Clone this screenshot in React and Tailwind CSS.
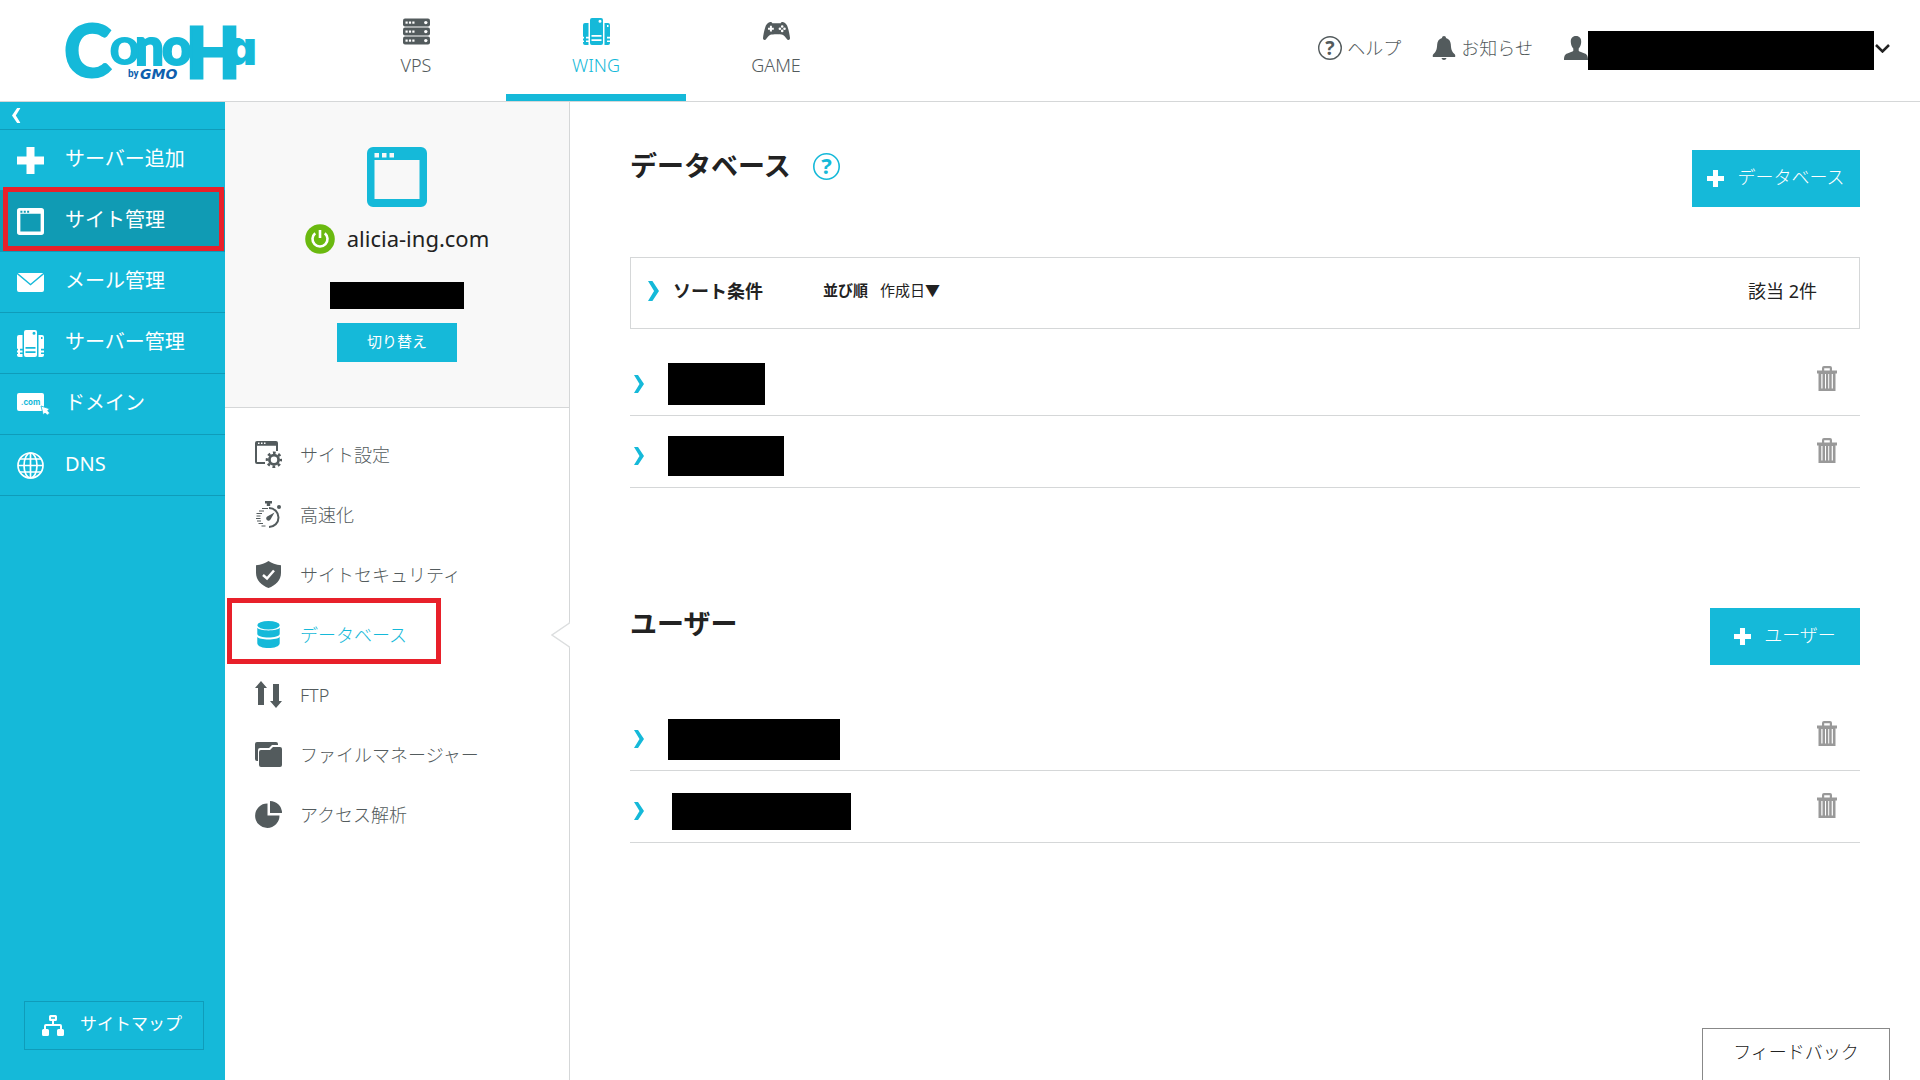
import React from "react";

const Logo = () => (
  <svg width="192" height="60" viewBox="64 20 192 60" role="img" aria-label="ConoHa by GMO" className="overflow-visible">
    <g fill="#15b9d9" stroke="#15b9d9" strokeWidth="2" fontFamily="Lato, sans-serif" fontWeight="900">
      <text x="64" y="76" fontSize="72">C</text>
      <text x="109" y="64" fontSize="54" stroke="#fff" strokeWidth="4" paintOrder="stroke">o</text>
      <text x="135" y="64" fontSize="51">n</text>
      <text x="162" y="64" fontSize="51">o</text>
      <text x="186" y="77" fontSize="70" strokeWidth="3">H</text>
      <text x="226" y="64" fontSize="48" strokeWidth="0" fontFamily="Inter, sans-serif" style={{ fontFeatureSettings: '"cv11"' }}>a</text>
    </g>
    <g fill="#0f5fae" fontWeight="700">
      <text x="128" y="76" fontSize="10" fontFamily="Roboto, sans-serif">by</text>
      <text x="140" y="78" fontSize="14" fontStyle="italic" fontFamily="'DejaVu Sans', sans-serif">GMO</text>
    </g>
  </svg>
);

const RackIcon = () => (
  <svg width="27" height="27" viewBox="0 0 27 27" fill="currentColor">
    {[0, 9, 18].map((y) => (
      <g key={y}>
        <rect x="0" y={y + 0.5} width="27" height="8" rx="2" />
        <g fill="#fff">
          <rect x="2.5" y={y + 3.5} width="2.2" height="2.2" />
          <rect x="5.9" y={y + 3.5} width="2.2" height="2.2" />
          <rect x="9.3" y={y + 3.5} width="2.2" height="2.2" />
          <circle cx="22.8" cy={y + 4.6} r="1.7" />
        </g>
      </g>
    ))}
  </svg>
);

const ServersIcon = () => (
  <svg width="27" height="27" viewBox="0 0 27 27" fill="currentColor" fillRule="evenodd">
    <path d="M9 0h9a2 2 0 0 1 2 2v23a2 2 0 0 1-2 2H9a2 2 0 0 1-2-2V2a2 2 0 0 1 2-2zM8.500 17v1.800h10V17zM8.500 21.200V23h10v-1.800zM17 1.800a1.500 1.500 0 1 0 0 3 1.500 1.500 0 0 0 0-3z" />
    <path d="M2 5h3.500v13.800H3v1.600h2.500v2H3V24h2.500v3H2a2 2 0 0 1-2-2v-1h1v-1.600H0v-2h1v-1.600H0V7a2 2 0 0 1 2-2z" />
    <path d="M21.500 5H25a2 2 0 0 1 2 2v11.800h-3v1.600h3v2h-3V24h3v1a2 2 0 0 1-2 2h-3.500zM24 7v2h1.500V7z" />
  </svg>
);

const GamepadIcon = () => (
  <svg width="27" height="27" viewBox="0 0 27 27" fill="currentColor" fillRule="evenodd">
    <path d="M6.500 4.300C7.500 3.900 8.700 4 9.300 5.200h8.400c.6-1.200 1.800-1.300 2.800-.9 2.300.8 3.500 2.500 4.300 5.200 1 3.300 1.900 7.500 2.200 10.500.1 1.800-1.500 2.600-2.700 1.500-1.400-1.500-3-3.900-4.800-4.700-2-.8-10-.8-12 0-1.800.8-3.400 3.200-4.800 4.700C1.500 22.600-.1 21.800 0 20c.3-3 1.200-7.200 2.200-10.500.8-2.700 2-4.400 4.300-5.200zM6.900 7.800v1.900H5v2h1.900v1.900h2v-1.900h1.900v-2H8.900V7.800zM19.200 7.200a1.300 1.300 0 1 0 0 2.600 1.300 1.300 0 0 0 0-2.600zm0 4.400a1.300 1.300 0 1 0 0 2.600 1.300 1.300 0 0 0 0-2.600zM16.900 9.400a1.300 1.300 0 1 0 0 2.600 1.300 1.300 0 0 0 0-2.600zm4.600 0a1.300 1.300 0 1 0 0 2.600 1.300 1.300 0 0 0 0-2.600z" />
  </svg>
);

const HelpIcon = ({ size }) => (
  <svg width={size} height={size} viewBox="0 0 27 27" className="overflow-visible">
    <circle cx="13.500" cy="13.500" r="12.700" fill="none" stroke="currentColor" strokeWidth="1.600" />
    <text x="13.500" y="21" textAnchor="middle" fontSize="22" fontWeight="700" fontFamily="Noto Sans, sans-serif" fill="currentColor">
      ?
    </text>
  </svg>
);

const BellIcon = () => (
  <svg width="24" height="24" viewBox="0 0 24 24" fill="currentColor">
    <path d="M12 0c1.200 0 2 .8 2 1.900 3 .9 4.600 3.300 4.800 6.300.3 4.300.5 7 3.700 9.800.9.800 1 2.500.5 3H1c-.5-.5-.4-2.200.5-3 3.200-2.800 3.400-5.500 3.700-9.800C5.400 5.200 7 2.800 10 1.900 10 .8 10.800 0 12 0zM9.500 22h5c-.3 1.300-1.200 2-2.500 2s-2.200-.7-2.500-2z" />
  </svg>
);

const PersonIcon = () => (
  <svg width="24" height="24" viewBox="0 0 24 24" fill="currentColor">
    <path d="M12 0c3.600 0 5.400 2.400 5.200 6-.1 2.800-1.100 5.200-2.500 6.500v2.300c.5 1 3.500 1.700 6 2.700 2.300.9 3.300 2.500 3.300 6.500H0c0-4 1-5.600 3.300-6.500 2.500-1 5.500-1.700 6-2.700v-2.300C7.900 11.200 6.900 8.800 6.800 6 6.600 2.400 8.400 0 12 0z" />
  </svg>
);

const PlusIcon = ({ size }) => (
  <svg width={size} height={size} viewBox="0 0 27 27" fill="currentColor">
    <path d="M9.500 0h8v9.500H27v8h-9.500V27h-8v-9.500H0v-8h9.500z" />
  </svg>
);

const WindowIcon = ({ size }) => (
  <svg width={size} height={size} viewBox="0 0 60 60" fill="currentColor" fillRule="evenodd">
    <path d="M6 0h48a6 6 0 0 1 6 6v48a6 6 0 0 1-6 6H6a6 6 0 0 1-6-6V6a6 6 0 0 1 6-6zM7.500 13v39h45V13zM7.500 6v4.500H12V6zM15 6v4.500h4.500V6zM22.500 6v4.500H27V6z" />
  </svg>
);

const MailIcon = () => (
  <svg width="27" height="19" viewBox="0 0 27 19" fill="currentColor">
    <path d="M.8 0h25.400L13.500 10.800zM0 1.200l13.500 11.300L27 1.200V17a2 2 0 0 1-2 2H2a2 2 0 0 1-2-2z" />
  </svg>
);

const DomainIcon = () => (
  <svg width="33" height="22" viewBox="0 0 33 22" fill="currentColor">
    <rect width="27" height="18" rx="2" />
    <text x="13.500" y="11.500" textAnchor="middle" fontSize="8" fontWeight="700" fontFamily="Inter, sans-serif" fill="#15b9d9">
      .com
    </text>
    <path d="M24 13l8.500 2.800-1.800 2 2 2.200-2.200 2-2.500-1.800-1.800 1.500z" stroke="#15b9d9" strokeWidth="0.800" />
  </svg>
);

const GlobeIcon = () => (
  <svg width="27" height="27" viewBox="0 0 27 27" fill="none" stroke="currentColor" strokeWidth="1.700">
    <circle cx="13.500" cy="13.500" r="12.500" />
    <ellipse cx="13.500" cy="13.500" rx="6.500" ry="12.500" />
    <path d="M13.500 1v25M1 13.500h25M3 7h21M3 20h21" />
  </svg>
);

const SitemapIcon = () => (
  <svg width="22" height="21" viewBox="0 0 22 21" fill="currentColor" fillRule="evenodd">
    <path d="M8.500 0h5A1.500 1.500 0 0 1 15 1.500v3A1.500 1.500 0 0 1 13.500 6H12v3h6a2 2 0 0 1 2 2v3h.500a1.500 1.500 0 0 1 1.500 1.500v4a1.500 1.500 0 0 1-1.500 1.500h-4a1.500 1.500 0 0 1-1.500-1.500v-4A1.500 1.500 0 0 1 16.500 14H18v-3H4v3h1.500A1.500 1.500 0 0 1 7 15.500v4A1.500 1.500 0 0 1 5.500 21h-4A1.500 1.500 0 0 1 0 19.500v-4A1.500 1.500 0 0 1 1.500 14H2v-3a2 2 0 0 1 2-2h6V6H8.500A1.500 1.500 0 0 1 7 4.500v-3A1.500 1.500 0 0 1 8.500 0zM9 2.200v1.600h4V2.200z" />
  </svg>
);

const PowerIcon = () => (
  <svg width="30" height="30" viewBox="0 0 30 30" fill="none" stroke="#fff" strokeWidth="2.600">
    <circle cx="15" cy="15" r="14.800" fill="#6ab90f" stroke="none" />
    <path d="M10.200 9.200a7.500 7.500 0 1 0 9.600 0M15 6v8" />
  </svg>
);

const SiteSettingIcon = () => (
  <svg width="27" height="27" viewBox="0 0 27 27" fill="currentColor" fillRule="evenodd">
    <path d="M2 0h19a2 2 0 0 1 2 2v8h-2V4.800H2V21h8v2H2a2 2 0 0 1-2-2V2a2 2 0 0 1 2-2zM3 1.500V3h1.500V1.500zM6 1.500V3h1.500V1.500zM9 1.500V3h1.500V1.500z" />
    <g fill="none" stroke="currentColor">
      <circle cx="19" cy="18.800" r="4.600" strokeWidth="2.800" />
      <circle cx="19" cy="18.800" r="7" strokeWidth="2.600" strokeDasharray="2.750 2.750" strokeDashoffset="1.300" />
    </g>
  </svg>
);

const StopwatchIcon = () => (
  <svg width="27" height="27" viewBox="0 0 27 27" fill="currentColor">
    <path d="M10 0h7v2.500h-1.800V5h-3.400V2.500H10z" />
    <circle cx="24" cy="6" r="2" />
    <path d="M14 7a9.500 9.500 0 0 1 0 19" fill="none" stroke="currentColor" strokeWidth="2" />
    <path d="M19.500 11.500l-4 7a2.300 2.300 0 1 1-3.300-3z" />
    <path d="M13 7.500H7M9 10H4M7 12.500H1.500M5.500 15H1.500M5.500 17.500H1M6 20H2M8 22.500H3.500M10.500 25H6.500" fill="none" stroke="currentColor" strokeWidth="1" />
  </svg>
);

const ShieldIcon = () => (
  <svg width="27" height="27" viewBox="0 0 27 27">
    <path d="M13.500 0c3 2.300 7.500 3.800 12.500 4.300v7.500c0 7.500-5.500 12.700-12.500 15.200C6.500 24.500 1 19.300 1 11.800V4.300C6 3.800 10.500 2.300 13.500 0z" fill="currentColor" />
    <path d="M8 14l4 3.500 7-8" fill="none" stroke="#fff" strokeWidth="2.500" />
  </svg>
);

const DatabaseIcon = () => (
  <svg width="27" height="27" viewBox="0 0 27 27" fill="currentColor">
    <ellipse cx="13.500" cy="4.200" rx="11.200" ry="4.200" />
    <path d="M2.300 6.800c2 3.500 20.400 3.500 22.400 0v6c0 5-22.400 5-22.400 0z" />
    <path d="M2.300 15.700c2 3.600 20.400 3.600 22.400 0v6.500c0 6.400-22.400 6.400-22.400 0z" />
  </svg>
);

const TransferIcon = () => (
  <svg width="27" height="27" viewBox="0 0 27 27" fill="currentColor">
    <path d="M6 0l6 7H9v17H3V7H0zM18 3h6v17h3l-6 7-6-7h3z" />
  </svg>
);

const FilesIcon = () => (
  <svg width="27" height="27" viewBox="0 0 27 27" fill="currentColor">
    <path d="M0 3a2 2 0 0 1 2-2h19a2 2 0 0 1 2 2v1h-6l-3 3H5a2 2 0 0 0-2 2v11H2a2 2 0 0 1-2-2z" />
    <path d="M4 11a2 2 0 0 1 2-2h9l3-3h7a2 2 0 0 1 2 2v16a2 2 0 0 1-2 2H6a2 2 0 0 1-2-2z" />
  </svg>
);

const PieIcon = () => (
  <svg width="27" height="27" viewBox="0 0 27 27" fill="currentColor">
    <path d="M12.500 2.500v12h12A12.200 12.200 0 1 1 12.500 2.500z" />
    <path d="M15 0a12 12 0 0 1 12 12H15z" />
  </svg>
);

const Chevron = ({ size }) => (
  <svg width={size / 2 + 1} height={size} viewBox="0 0 10 18" fill="currentColor" preserveAspectRatio="none">
    <path d="M0 0h4l6 9-6 9H0l5.500-9z" />
  </svg>
);

const TrashIcon = () => (
  <svg width="20" height="25" viewBox="0 0 20 25" fill="currentColor" fillRule="evenodd">
    <path d="M5 4.500V2a2 2 0 0 1 2-2h6a2 2 0 0 1 2 2v2.500h5v3h-1.500V25h-17V7.500H0v-3zM7.200 4.500h5.600V2.200H7.200zM4.300 8v14.500h1.200V8zM8 8v14.500h1V8zM11.200 8v14.500h1V8zM14.700 8v14.500h1.200V8z" />
  </svg>
);

const services = [
  { label: "VPS", Icon: RackIcon },
  { label: "WING", Icon: ServersIcon, active: true },
  { label: "GAME", Icon: GamepadIcon },
];

const sideItems = [
  { label: "サーバー追加", icon: <PlusIcon size={27} /> },
  { label: "サイト管理", icon: <WindowIcon size={27} />, active: true },
  { label: "メール管理", icon: <MailIcon /> },
  { label: "サーバー管理", icon: <ServersIcon /> },
  { label: "ドメイン", icon: <DomainIcon /> },
  { label: "DNS", icon: <GlobeIcon /> },
];

const siteItems = [
  { label: "サイト設定", Icon: SiteSettingIcon },
  { label: "高速化", Icon: StopwatchIcon },
  { label: "サイトセキュリティ", Icon: ShieldIcon },
  { label: "データベース", Icon: DatabaseIcon, active: true },
  { label: "FTP", Icon: TransferIcon },
  { label: "ファイルマネージャー", Icon: FilesIcon },
  { label: "アクセス解析", Icon: PieIcon },
];

const databases = ["w-[97px] h-[42px]", "w-[116px] h-10"];
const users = ["w-[172px] h-[41px]", "w-[179px] h-[37px] ml-1"];

const Header = () => (
  <header className="flex h-[102px] shrink-0 justify-between border-b border-[#d5d7d8] text-lg text-[#535b5d]">
    <div className="flex">
      <a href="#" className="flex w-[326px] items-center pl-16">
        <Logo />
      </a>
      <nav className="flex">
        {services.map(({ label, Icon, active }) => (
          <a
            key={label}
            href="#"
            className={`flex w-[180px] flex-col items-center gap-2 pt-[18px] leading-6 ${
              active ? "border-b-[7px] border-[#15b9d9] text-[#15b9d9]" : ""
            }`}
          >
            <Icon />
            {label}
          </a>
        ))}
      </nav>
    </div>
    <div className="flex h-24 items-center pr-[30px]">
      <a href="#" className="mr-[31px] flex items-center gap-[5px]">
        <HelpIcon size={24} />
        ヘルプ
      </a>
      <a href="#" className="mr-[31px] flex items-center gap-[5px]">
        <BellIcon />
        お知らせ
      </a>
      <button type="button" aria-label="アカウント" className="flex items-center">
        <PersonIcon />
        <span className="mt-1 mr-px h-[39px] w-[286px] bg-black" />
        <svg width="15" height="9" viewBox="0 0 15 9" fill="none" stroke="#222" strokeWidth="2.500">
          <path d="M1 1l6.500 6.500L14 1" />
        </svg>
      </button>
    </div>
  </header>
);

const Sidebar = () => (
  <aside className="flex w-[225px] shrink-0 flex-col bg-[#15b9d9] font-normal text-white">
    <button type="button" aria-label="閉じる" className="flex h-7 items-center border-b border-[#0f9cba] pl-3">
      <span className="rotate-180">
        <Chevron size={15} />
      </span>
    </button>
    <nav>
      {sideItems.map(({ label, icon, active }) => (
        <a
          key={label}
          href="#"
          className={`relative flex h-[61px] items-center border-b border-[#0f9cba] pl-[17px] text-xl ${
            active ? "bg-[#109bb4]" : ""
          }`}
        >
          <span className="w-12 shrink-0">{icon}</span>
          <span className="pb-0.5">{label}</span>
          {active && <span className="absolute -top-1 right-px bottom-0 left-[3px] border-5 border-[#e8202a]" />}
        </a>
      ))}
    </nav>
    <a
      href="#"
      className="mt-auto mb-[30px] ml-6 flex h-[49px] w-[180px] items-center gap-4 border border-[#0f9cba] pl-[17px] text-[17px]"
    >
      <SitemapIcon />
      <span className="pb-1">サイトマップ</span>
    </a>
  </aside>
);

const SitePanel = () => (
  <div className="w-[345px] shrink-0 border-r border-[#d5d7d8]">
    <div className="flex h-[306px] flex-col items-center border-b border-[#d5d7d8] bg-[#f8f8f8] pt-[45px] font-normal text-[#15b9d9]">
      <WindowIcon size={60} />
      <div className="mt-4 flex h-8 items-center gap-3 text-[22px] text-[#222]">
        <PowerIcon />
        <span className="pb-0.5">alicia-ing.com</span>
      </div>
      <span className="mt-[27px] h-[27px] w-[134px] bg-black" />
      <button type="button" className="mt-[14px] h-[39px] w-[120px] bg-[#15b9d9] pb-0.5 text-[15px] text-white">
        切り替え
      </button>
    </div>
    <nav className="pt-4">
      {siteItems.map(({ label, Icon, active }) => (
        <a
          key={label}
          href="#"
          className={`relative flex h-[60px] items-center gap-[18px] pl-[30px] text-lg ${
            active ? "text-[#15b9d9]" : "text-[#535b5d]"
          }`}
        >
          <Icon />
          <span className="pt-0.5">{label}</span>
          {active && (
            <>
              <span className="absolute -top-1.5 left-0.5 h-[66px] w-[214px] border-5 border-[#e8202a]" />
              <svg className="absolute top-[18px] -right-px" width="19" height="26" viewBox="0 0 19 26">
                <path d="M19 0v26l-1-1L1 13 18 1z" fill="#fff" />
                <path d="M18.500 0v1L1 13l17.500 12v1" fill="none" stroke="#dcdedf" strokeWidth="1.500" />
              </svg>
            </>
          )}
        </a>
      ))}
    </nav>
  </div>
);

const RowList = ({ rows }) => (
  <ul>
    {rows.map((mask) => (
      <li key={mask} className="flex h-[72px] items-center border-b border-[#d5d7d8] pt-[9px] pr-[23px] pl-1">
        <button type="button" aria-label="詳細" className="w-[34px] shrink-0 text-[#15b9d9]">
          <Chevron size={18} />
        </button>
        <span className={`bg-black ${mask}`} />
        <button type="button" aria-label="削除" className="mb-3 ml-auto text-[#999]">
          <TrashIcon />
        </button>
      </li>
    ))}
  </ul>
);

const App = () => {
  return (
    <div className="flex min-h-screen flex-col bg-white font-['Noto_Sans','Noto_Sans_CJK_JP',sans-serif] font-light text-[#222]">
      <Header />
      <div className="flex flex-1">
        <Sidebar />
        <SitePanel />
        <main className="min-w-0 flex-1 px-[60px] pt-12">
          <section>
            <div className="flex items-start justify-between">
              <div className="flex h-8 items-center gap-[22px]">
                <h1 className="text-[27px] leading-8 font-bold">データベース</h1>
                <a href="#" aria-label="ヘルプ" className="text-[#15b9d9]">
                  <HelpIcon size={27} />
                </a>
              </div>
              <button type="button" className="flex h-[57px] w-[168px] items-center justify-center gap-[13px] bg-[#15b9d9] text-lg text-white">
                <PlusIcon size={17} />
                <span className="pb-1">データベース</span>
              </button>
            </div>
            <div className="mt-[50px] mb-[15px] flex h-[72px] items-center border border-[#d5d7d8] pr-[42px] pb-1 pl-[17px] text-lg">
              <span className="w-[25px] text-[#15b9d9]">
                <Chevron size={20} />
              </span>
              <h2 className="mr-[60px] font-bold">ソート条件</h2>
              <span className="mr-3 text-[15px] font-bold">並び順</span>
              <button type="button" className="text-[15px] font-normal">
                作成日▼
              </button>
              <span className="ml-auto font-normal">該当 2件</span>
            </div>
            <RowList rows={databases} />
          </section>
          <section className="mt-[120px]">
            <div className="mb-[34px] flex items-start justify-between">
              <h1 className="text-[27px] leading-8 font-bold">ユーザー</h1>
              <button type="button" className="flex h-[57px] w-[150px] items-center justify-center gap-[13px] bg-[#15b9d9] text-lg text-white">
                <PlusIcon size={17} />
                <span className="pb-1">ユーザー</span>
              </button>
            </div>
            <RowList rows={users} />
          </section>
        </main>
      </div>
      <button type="button" className="fixed right-[30px] bottom-0 h-[52px] w-[188px] border border-b-0 border-[#888] bg-white pb-1.5 text-lg">
        フィードバック
      </button>
    </div>
  );
};

export default App;
